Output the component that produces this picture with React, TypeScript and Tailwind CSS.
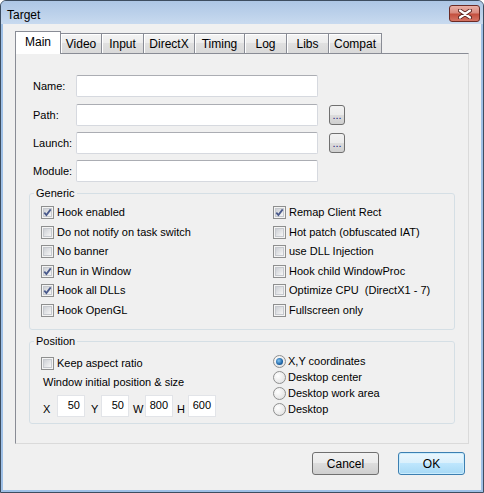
import React from 'react';

function CheckBox({ checked }: { checked?: boolean }) {
  return (
    <span className="relative flex h-[13px] w-[13px] shrink-0 items-center justify-center border border-[#8e8f8f] bg-[#f4f4f4]">
      <span className="h-[9px] w-[9px] border border-[#c6c9ce] bg-[linear-gradient(135deg,#cdd0d5,#f6f6f6)]" />
      {checked && (
        <svg className="absolute left-0 top-0" width="11" height="11" viewBox="0 0 11 11">
          <path d="M2.3 5.6 L4.4 8 L8.7 2.4" fill="none" stroke="#4a5a8c" strokeWidth="1.8" />
        </svg>
      )}
    </span>
  );
}

function Radio({ checked }: { checked?: boolean }) {
  return (
    <span className="flex h-[13px] w-[13px] shrink-0 items-center justify-center rounded-full border border-[#8e8f8f] bg-[radial-gradient(circle_at_35%_35%,#ffffff,#dcdcdc)]">
      {checked && (
        <span className="h-[7px] w-[7px] rounded-full bg-[radial-gradient(circle_at_40%_40%,#86c6f2,#1e64a6_60%,#0c3c6e)]" />
      )}
    </span>
  );
}

function CheckRow({ label, checked }: { label: string; checked?: boolean }) {
  return (
    <div className="flex h-[19.5px] items-center gap-[3px]">
      <CheckBox checked={checked} />
      <span className="whitespace-pre">{label}</span>
    </div>
  );
}

function RadioRow({ label, checked }: { label: string; checked?: boolean }) {
  return (
    <div className="flex h-[16px] items-center gap-[2px]">
      <Radio checked={checked} />
      <span>{label}</span>
    </div>
  );
}

function FieldRow({ label, browse, className }: { label: string; browse?: boolean; className?: string }) {
  return (
    <div className={`flex h-[22px] items-center ${className ?? ''}`}>
      <span className="w-[43px]">{label}</span>
      <div className="h-[22px] w-[242px] rounded-[2px] border border-[#d6d9df] border-t-[#abadb3] bg-white" />
      {browse && (
        <button className="ml-[11px] flex h-[20px] w-[16px] items-center justify-center rounded-[3px] border border-[#707070] bg-[linear-gradient(#f2f2f2,#ebebeb_50%,#dddddd_50%,#cfcfcf)] text-[11px] leading-[13px] text-[#1a1a7a]">
          ...
        </button>
      )}
    </div>
  );
}

function NumBox({ value }: { value: string }) {
  return (
    <div className="h-[22px] w-[28px] border border-[#e2e4e8] bg-white pr-[4px] pt-[3px] text-right">
      {value}
    </div>
  );
}

const tabs = [
  { name: 'Video', w: 'w-[41px]' },
  { name: 'Input', w: 'w-[42px]' },
  { name: 'DirectX', w: 'w-[51px]' },
  { name: 'Timing', w: 'w-[50px]' },
  { name: 'Log', w: 'w-[42px]' },
  { name: 'Libs', w: 'w-[42px]' },
  { name: 'Compat', w: 'w-[53px]' },
];

export default function App() {
  return (
    <div className="flex h-[493px] w-[484px] flex-col overflow-hidden rounded-t-[6px] border border-[#3d4d60] bg-[#9fc0e6] font-['Liberation_Sans',Arial,sans-serif] text-[11px] leading-[13px] text-black">
      {/* Title bar */}
      <div className="flex h-[23px] shrink-0 items-start bg-[linear-gradient(#adc6e5,#c8daef)]">
        <span className="flex-1 pl-[6px] pt-[7px] text-[12px] leading-[14px]">Target</span>
        <button className="mr-[3px] mt-[4px] flex h-[17px] w-[31px] items-center justify-center rounded-[3px] border border-[#6b2a24] bg-[linear-gradient(#eab0a6,#d98a7e_45%,#c4503f_55%,#d57464)]">
          <svg width="14" height="10" viewBox="0 0 14 10">
            <path d="M2 1.5 L12 8.5 M12 1.5 L2 8.5" stroke="#5a231e" strokeWidth="4" strokeLinecap="round" />
            <path d="M2 1.5 L12 8.5 M12 1.5 L2 8.5" stroke="#ffffff" strokeWidth="2.2" strokeLinecap="round" />
          </svg>
        </button>
      </div>

      {/* Client area */}
      <div className="mx-[2px] flex h-[466px] shrink-0 flex-col bg-[#f0f0f0] pt-[7px]">
        {/* Tabs */}
        <div className="ml-[12px] flex h-[22px] items-end">
          <div className="relative z-10 -mb-px flex h-[23px] w-[46px] justify-center border border-b-0 border-[#898c95] bg-white pt-[3px] text-[12px] leading-[14px]">
            Main
          </div>
          {tabs.map((t) => (
            <div
              key={t.name}
              className={`flex h-[20px] ${t.w} justify-center border border-b-0 border-l-0 border-[#898c95] bg-[linear-gradient(#f4f4f4,#ececec_50%,#e0e0e0_50%,#d9d9d9)] pt-[3px] text-[12px] leading-[14px] shadow-[inset_1px_1px_0_#ffffff]`}
            >
              {t.name}
            </div>
          ))}
        </div>

        {/* Tab panel */}
        <div className="ml-[12px] h-[391px] w-[454px] border border-[#898c95] border-b-[#dadada] border-r-[#dadada] bg-[#f0f0f0]">
          <div className="pl-[17px] pt-[21px]">
            <FieldRow label="Name:" />
            <FieldRow label="Path:" browse className="mt-[7px]" />
            <FieldRow label="Launch:" browse className="mt-[6px]" />
            <FieldRow label="Module:" className="mt-[6px]" />
          </div>

          <fieldset className="ml-[13px] mt-[5px] w-[426px] rounded-[3px] border border-[#d5dfe5] pb-[9px]">
            <legend className="ml-[4px] px-[2px]">Generic</legend>
            <div className="flex pl-[11px] pt-[3px]">
              <div className="w-[232px]">
                <CheckRow label="Hook enabled" checked />
                <CheckRow label="Do not notify on task switch" />
                <CheckRow label="No banner" />
                <CheckRow label="Run in Window" checked />
                <CheckRow label="Hook all DLLs" checked />
                <CheckRow label="Hook OpenGL" />
              </div>
              <div>
                <CheckRow label="Remap Client Rect" checked />
                <CheckRow label="Hot patch (obfuscated IAT)" />
                <CheckRow label="use DLL Injection" />
                <CheckRow label="Hook child WindowProc" />
                <CheckRow label="Optimize CPU  (DirectX1 - 7)" />
                <CheckRow label="Fullscreen only" />
              </div>
            </div>
          </fieldset>

          <fieldset className="ml-[13px] mt-[5px] w-[426px] rounded-[3px] border border-[#d5dfe5] pb-[6px]">
            <legend className="ml-[4px] px-[2px]">Position</legend>
            <div className="flex pl-[11px]">
              <div className="w-[232px] pt-[6px]">
                <div className="flex h-[19px] items-center gap-[3px]">
                  <CheckBox />
                  <span>Keep aspect ratio</span>
                </div>
                <div className="ml-[2px] mt-[3px]">Window initial position &amp; size</div>
                <div className="ml-[2px] mt-[6px] flex items-end">
                  <span className="mb-[1px] w-[14px] leading-[14px]">X</span>
                  <NumBox value="50" />
                  <span className="mb-[1px] ml-[6px] w-[10px] leading-[14px]">Y</span>
                  <NumBox value="50" />
                  <span className="mb-[1px] ml-[4px] w-[12px] leading-[14px]">W</span>
                  <NumBox value="800" />
                  <span className="mb-[1px] ml-[4px] w-[11px] leading-[14px]">H</span>
                  <NumBox value="600" />
                </div>
              </div>
              <div className="pt-[5px]">
                <RadioRow label="X,Y coordinates" checked />
                <RadioRow label="Desktop center" />
                <RadioRow label="Desktop work area" />
                <RadioRow label="Desktop" />
              </div>
            </div>
          </fieldset>
        </div>

        {/* Buttons */}
        <div className="mt-[8px] flex justify-end gap-[19px] pr-[16px] text-[12px] leading-[14px]">
          <button className="h-[23px] w-[67px] rounded-[3px] border border-[#707070] bg-[linear-gradient(#f2f2f2,#ebebeb_50%,#dddddd_50%,#cfcfcf)]">
            Cancel
          </button>
          <button className="h-[23px] w-[67px] rounded-[3px] border border-[#3c7fb1] bg-[linear-gradient(#eaf6fd,#d9f0fc_50%,#bee6fd_50%,#a7d9f5)] shadow-[inset_0_0_0_1px_#c9ecfd]">
            OK
          </button>
        </div>
      </div>
    </div>
  );
}
